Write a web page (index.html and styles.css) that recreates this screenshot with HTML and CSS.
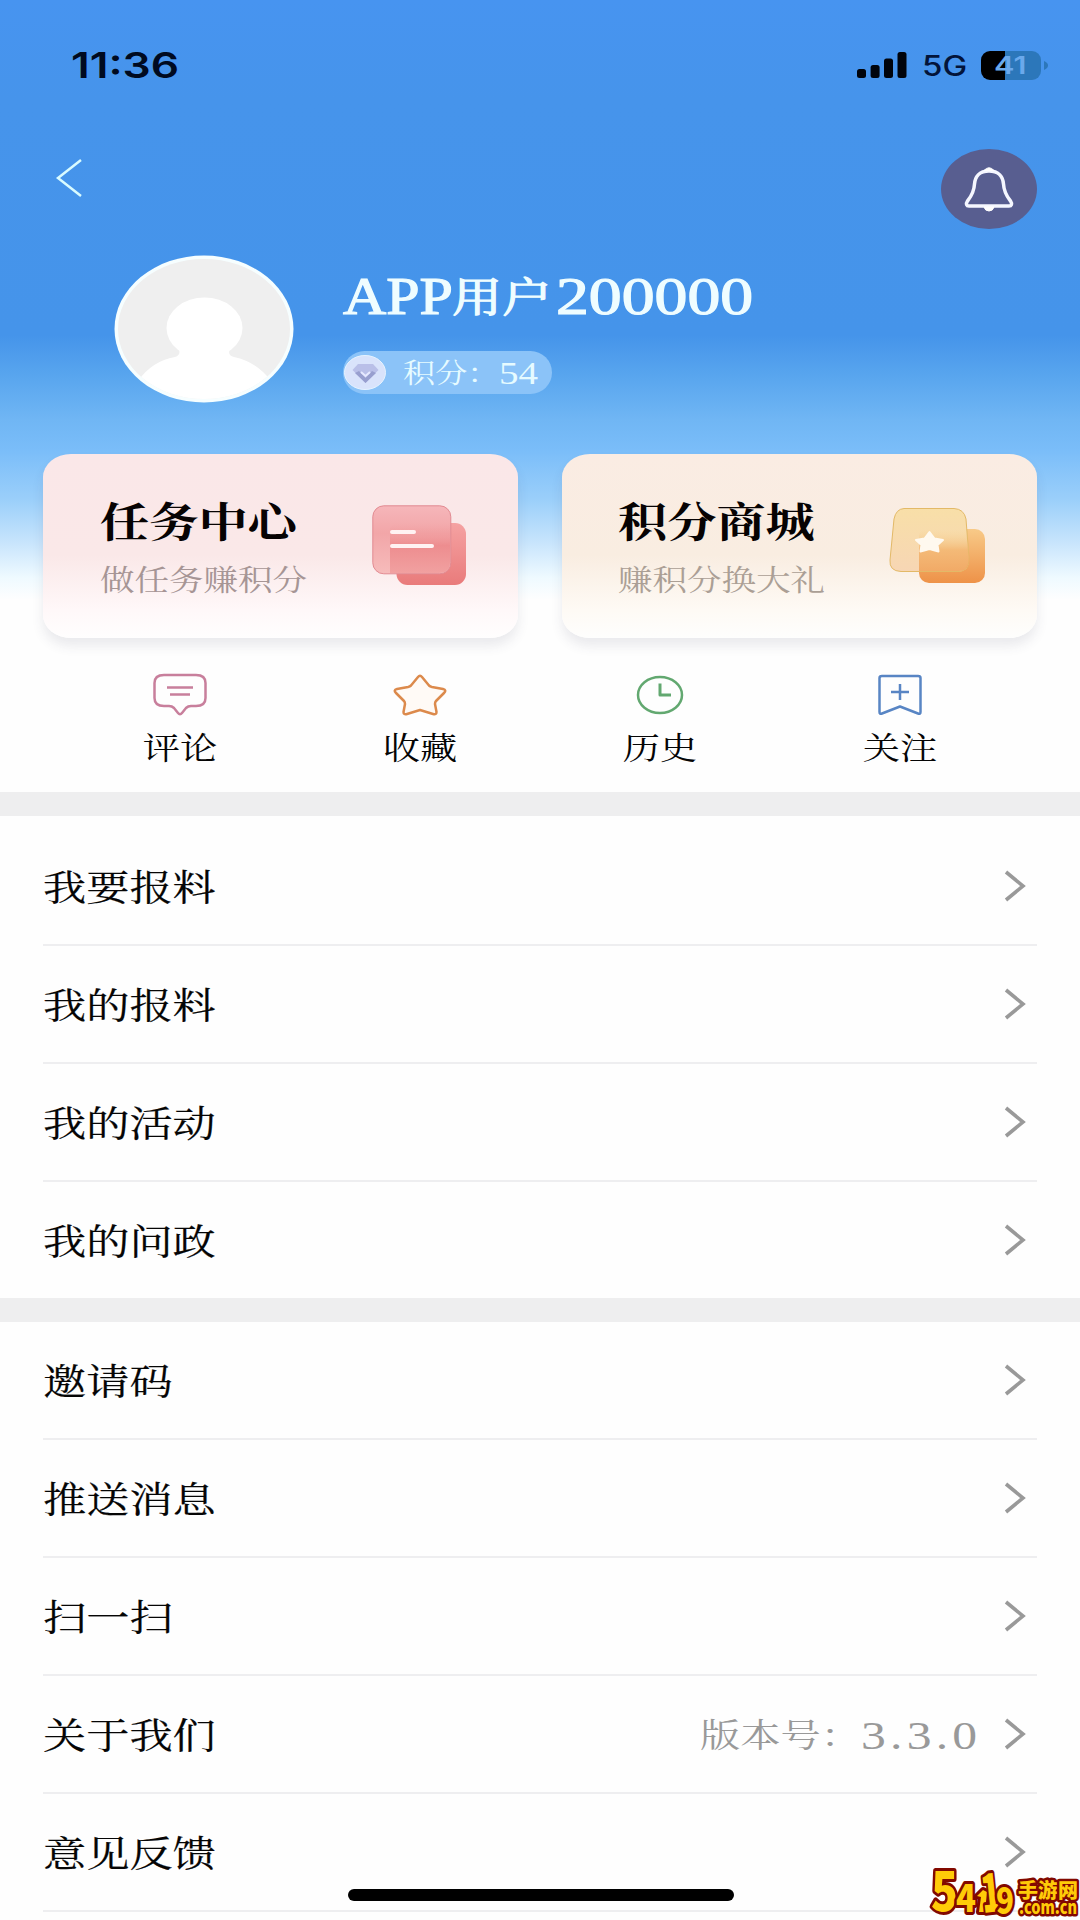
FILE: index.html
```html
<!DOCTYPE html>
<html lang="zh-CN">
<head>
<meta charset="utf-8">
<title>个人中心</title>
<link rel="stylesheet" href="styles.css">
</head>
<body>
<div class="screen">
  <header class="hero">
    <div class="status">
      <span class="time"><span class="wide">11:36</span></span>
      <div class="status-right">
        <svg class="signal" width="50" height="26" viewBox="0 0 50 26"><rect x="0" y="17" width="9" height="9" rx="2.5"/><rect x="13.6" y="13" width="9" height="13" rx="2.5"/><rect x="27" y="6.500" width="9" height="19.500" rx="2.500"/><rect x="40.500" y="0" width="9" height="26" rx="2.500"/></svg>
        <span class="network"><span class="wide">5G</span></span>
        <div class="battery"><span class="wide">41</span></div>
        <svg width="4" height="11" viewBox="0 0 5 11"><path d="M0 0Q5 2 5 5.500T0 11Z" fill="#2c77ba"/></svg>
      </div>
    </div>
    <div class="nav">
      <svg class="back" width="28" height="40" viewBox="0 0 28 40"><path d="M26 2L3 20L26 38"/></svg>
      <div class="bell">
        <svg width="50" height="46" viewBox="0 0 50 46"><path d="M25 5C15 5 11 11 10.500 18C10 27 6.500 31 3.500 35C1.500 38 2.500 40 5 40H45C47.500 40 48.500 38 46.500 35C43.500 31 40 27 39.500 18C39 11 35 5 25 5Z" fill="none" stroke="#f5f7ff" stroke-width="3.500"/><path d="M20 4.500Q25-1 30 4.500ZM20 41H30Q29 45 25 45T20 41Z" fill="#fff" stroke="#fff"/></svg>
      </div>
    </div>
    <div class="profile">
      <svg class="avatar" width="180" height="148" viewBox="0 0 180 148"><defs><clipPath id="face"><ellipse cx="90" cy="74" rx="86" ry="70"/></clipPath></defs><ellipse cx="90" cy="74" rx="89.500" ry="73.500" fill="#f6feff"/><g clip-path="url(#face)"><path d="M0 0H180V148H0Z" fill="#efefef"/><ellipse cx="90.500" cy="73" rx="38" ry="30.500" fill="#fff"/><path d="M24 126Q38 106 61 102Q68 100 64 92H117Q112 100 120 102Q143 107 157 126V148H24Z" fill="#fff"/></g></svg>
      <div class="user">
        <div class="name"><span class="name-app">APP</span><span class="name-cn">用户</span><span class="name-id">200000</span></div>
        <div class="points">
          <svg width="42" height="35" viewBox="0 0 42 35"><ellipse cx="21" cy="17.500" rx="20.500" ry="17" fill="#d9e3fb" stroke="#e6f3ff"/><path d="M14 9H29L34.500 15L21.500 28L8.500 15Z" fill="#b9bfe8"/><path d="M11 18L21.500 28L32 18L28 16L21.500 23L15 16Z" fill="#989fcf"/><path d="M17 17L21.500 21L26 17" fill="none" stroke="#e6e9ff" stroke-width="2"/></svg>
          <span class="points-label">积分：</span><span class="points-value">54</span>
        </div>
      </div>
    </div>
    <div class="cards">
      <section class="card card-task">
        <div><h2>任务中心</h2><p>做任务赚积分</p></div>
        <svg width="96" height="82" viewBox="0 0 96 82">
          <defs><linearGradient id="r1" x2="0" y2="1"><stop stop-color="#f5a2a2"/><stop offset="1" stop-color="#e97b7b"/></linearGradient><linearGradient id="r2" x2="0" y2="1"><stop stop-color="#f6b6ba"/><stop offset=".4" stop-color="#f2a6a8"/><stop offset="1" stop-color="#f6bbbb"/></linearGradient><linearGradient id="r3" x2="0" y2="1"><stop stop-color="#f2a0a2" stop-opacity="0"/><stop offset=".45" stop-color="#ec8587"/><stop offset="1" stop-color="#f09a9a"/></linearGradient></defs>
          <rect x="24.500" y="18" width="69.500" height="62" rx="11" fill="url(#r1)"/><rect x=".8" y=".8" width="78" height="68" rx="11" fill="url(#r2)" stroke="#e28b92"/><path d="M18 68V26Q18 18 28 18H78V57Q78 68 67 68Z" fill="url(#r3)" opacity=".8"/><path d="M20 27H42M20 41H60" stroke="#fff2f2" stroke-width="4" stroke-linecap="round"/></svg>
      </section>
      <section class="card card-shop">
        <div><h2>积分商城</h2><p>赚积分换大礼</p></div>
        <svg width="96" height="82" viewBox="0 0 96 82">
          <defs><linearGradient id="o1" x2="0" y2="1"><stop stop-color="#f8ca88"/><stop offset="1" stop-color="#ee9248"/></linearGradient><linearGradient id="o2" x2="0" y2="1"><stop stop-color="#f8dfa8"/><stop offset="1" stop-color="#f7d6b4"/></linearGradient><linearGradient id="o3" x2="0" y2="1"><stop stop-color="#f7d795" stop-opacity="0"/><stop offset=".5" stop-color="#f3b46d"/><stop offset="1" stop-color="#f0a259"/></linearGradient></defs>
          <rect x="29" y="24" width="66" height="54" rx="10" fill="url(#o1)"/><path d="M14 3.500H64Q74 4 76 14L79 54Q79 66 69 66.500H11Q-1 66 0 55L4 14Q6 4 14 3.500Z" fill="url(#o2)" stroke="#e3b967"/><path d="M29 66V32Q29 24 38 24H76.500L79 54Q79 66 69 66Z" fill="url(#o3)" opacity=".85"/><path d="M39.500 27L44.500 33.500L53 35L47.500 40L48.500 46.500L39.500 44L30.500 46.500L31.500 40L26 35L34.500 33.500Z" fill="#fff9ef" stroke="#fff9ef" stroke-width="2" stroke-linejoin="round"/></svg>
      </section>
    </div>
  </header>

  <nav class="shortcuts">
    <div class="shortcut"><svg width="56" height="46" viewBox="0 0 56 46" stroke="#c87f9c" fill="none"><path d="M12 3H44Q53.500 3 53.500 11V26Q53.500 34 44 34H39Q36 34 34 36L30 41Q28 43.500 26 41L22 36Q20 34 17 34H12Q2.500 34 2.500 26V11Q2.500 3 12 3Z"/><path d="M15 15.500H41M18 22.500H38"/></svg><span>评论</span></div>
    <div class="shortcut"><svg width="56" height="46" viewBox="0 0 56 46" stroke="#dc8a4c" fill="#fffaf6"><path d="M26 5Q28 2.500 30 5L37 13.500Q38 14.500 40 15L51 17Q55 18 52 21L44 29Q43 30 43 32L44.500 40Q44.500 43 41 42L28 38L15 42Q11.500 43 11.500 40L13 32Q13 30 12 29L4 21Q1 18 5 17L16 15Q18 14.500 19 13.500Z"/></svg><span>收藏</span></div>
    <div class="shortcut"><svg width="56" height="46" viewBox="0 0 56 46" stroke="#62a870" fill="none"><ellipse cx="28" cy="23" rx="22" ry="18"/><path d="M28 11.500V23H39" stroke-width="3"/></svg><span>历史</span></div>
    <div class="shortcut"><svg width="56" height="46" viewBox="0 0 56 46" stroke="#5885c4" fill="none"><path d="M10 4H46Q48.500 4 48.500 6V40Q48.500 42.500 46 41.500L28 34.500L10 41.500Q7.500 42.500 7.500 40V6Q7.500 4 10 4Z"/><path d="M28 12V28M19 20H37"/></svg><span>关注</span></div>
  </nav>

  <ul class="menu menu-first">
    <li><span class="label">我要报料</span><svg class="arrow" viewBox="0 0 22 32"><path d="M2 2L19 16L2 30"/></svg></li>
    <li><span class="label">我的报料</span><svg class="arrow" viewBox="0 0 22 32"><path d="M2 2L19 16L2 30"/></svg></li>
    <li><span class="label">我的活动</span><svg class="arrow" viewBox="0 0 22 32"><path d="M2 2L19 16L2 30"/></svg></li>
    <li><span class="label">我的问政</span><svg class="arrow" viewBox="0 0 22 32"><path d="M2 2L19 16L2 30"/></svg></li>
  </ul>
  <ul class="menu">
    <li><span class="label">邀请码</span><svg class="arrow" viewBox="0 0 22 32"><path d="M2 2L19 16L2 30"/></svg></li>
    <li><span class="label">推送消息</span><svg class="arrow" viewBox="0 0 22 32"><path d="M2 2L19 16L2 30"/></svg></li>
    <li><span class="label">扫一扫</span><svg class="arrow" viewBox="0 0 22 32"><path d="M2 2L19 16L2 30"/></svg></li>
    <li><span class="label">关于我们</span><span class="version"><span class="version-label">版本号：</span><span class="version-value">3.3.0</span></span><svg class="arrow" viewBox="0 0 22 32"><path d="M2 2L19 16L2 30"/></svg></li>
    <li><span class="label">意见反馈</span><svg class="arrow" viewBox="0 0 22 32"><path d="M2 2L19 16L2 30"/></svg></li>
  </ul>
  <div class="home-bar"></div>
  <svg class="watermark" width="150" height="54" viewBox="0 0 150 54">
    <g class="logo-digits"><text x="1" y="45" font-size="54" textLength="27" lengthAdjust="spacingAndGlyphs">5</text><text x="26" y="46" font-size="38" textLength="20" lengthAdjust="spacingAndGlyphs">4</text><path d="M47 30L53 24L57 26L55 46H49L51 31Z"/><text x="51" y="46" font-size="52" textLength="20" lengthAdjust="spacingAndGlyphs" transform="rotate(-6 61 28)">1</text><text x="66" y="48" font-size="36" textLength="18" lengthAdjust="spacingAndGlyphs">9</text></g>
    <g class="logo-words"><text x="88" y="32" font-size="20" textLength="60">手游网</text><text x="89" y="48" font-size="18" textLength="58" lengthAdjust="spacingAndGlyphs">.com.cn</text></g>
  </svg>
</div>
</body>
</html>
```
FILE: styles.css
```css
* { box-sizing: border-box; }
body {
  margin: 0;
  font-family: "Liberation Serif", "Noto Serif CJK SC", "Noto Serif SC", "Noto Sans CJK SC", serif;
  color: #050505;
  background: #fff;
}
h2, p, ul { margin: 0; padding: 0; }
svg { display: block; flex: none; overflow: visible; }

.screen { position: relative; width: 1080px; height: 1920px; overflow: hidden; background: #fefefe; }
.hero {
  height: 660px;
  background: linear-gradient(#4794f0 0, #4694eb 100px, #4594ea 335px, #58a5ee 375px, #70b6f4 420px, #7abdf9 450px, #9bcffa 500px, #c5e3fc 540px, #effaff 578px, #fefefe 600px);
}

.status { height: 130px; padding: 0 32px 0 71px; display: flex; justify-content: space-between; }
.wide { display: inline-block; transform-origin: left center; white-space: nowrap; }
.time { font: 600 36px/44px Inter, sans-serif; color: #000a20; padding-top: 43px; }
.time .wide { transform: scaleX(1.23); }
.status-right { display: flex; align-items: center; height: 130px; gap: 0; }
.signal { margin-right: 15px; fill: #00040c; }
.network { width: 59px; font: 500 28px/36px Inter, sans-serif; color: #03143a; padding-top: 2px; }
.network .wide { transform: scaleX(1.18); }
.battery { width: 60px; height: 29px; margin-right: 3px; padding-left: 13px; border-radius: 9px; background: linear-gradient(90deg, #000 24px, #2c77ba 24px); font: 600 24px/29px Inter, sans-serif; color: #6aa9ec; }
.battery .wide { transform: scaleX(1.28); }

.nav { height: 125px; padding: 0 43px 0 55px; display: flex; justify-content: space-between; }
.back { margin-top: 28px; fill: none; stroke: #d8fbff; stroke-width: 2.5; }
.bell { width: 96px; height: 80px; margin-top: 19px; border-radius: 50%; background: #585e90; display: flex; align-items: center; justify-content: center; }

.profile { height: 199px; padding-left: 114px; display: flex; gap: 49px; }
.name { height: 60px; margin-top: 11px; display: flex; font-size: 53px; line-height: 60px; color: #effdff; -webkit-text-stroke: 1.2px #effdff; }
.name span { display: block; transform-origin: left center; white-space: nowrap; }
.name-app { width: 109px; transform: scaleX(1.13); }
.name-cn { width: 104px; padding-top: 2px; font-size: 41px; transform: scaleX(1.22); }
.name-id { transform: scaleX(1.24); }
.points { width: 209px; height: 43px; margin-top: 25px; padding-left: 1px; display: flex; align-items: center; border-radius: 22px; background: #8bc3f8; color: #e6fbff; line-height: 43px; }
.points-label { width: 96px; margin-left: 17px; padding-top: 3px; font-size: 27px; transform: scaleX(1.19); transform-origin: left; white-space: nowrap; }
.points-value { padding-top: 2px; font-size: 32px; transform: scaleX(1.22); transform-origin: left; }

.cards { padding: 0 43px; display: grid; grid-template-columns: 475px 475px; gap: 44px; }
.card { height: 184px; padding: 0 51px 0 57px; border-radius: 28px / 23px; display: flex; align-items: center; justify-content: space-between; box-shadow: 0 8px 12px rgba(60, 60, 90, .1); }
.card > div { width: 210px; padding-top: 5px; }
.card svg { margin-right: -1px; }
.card-task { background: linear-gradient(#fae7e8 0, #fae8e8 55%, #fff8f9 85%, #fffefe); }
.card-shop { padding: 0 52px 0 56px; background: linear-gradient(#faece3 0, #f9ede1 55%, #fefaf5 85%, #fefefd); }
.card h2 { width: 164px; font-size: 41px; line-height: 52px; font-weight: 700; color: #070303; transform: scaleX(1.2); transform-origin: left; white-space: nowrap; }
.card p { width: 174px; margin-top: 12px; font-size: 29px; line-height: 40px; transform: scaleX(1.19); transform-origin: left; white-space: nowrap; }
.card-task p { color: #a69595; }
.card-shop p { color: #ab9f95; }
.shortcuts { height: 132px; padding: 12px 60px 0; display: grid; grid-template-columns: repeat(4, 240px); }
.shortcut { display: flex; flex-direction: column; align-items: center; }
.shortcut svg { stroke-width: 2.5; stroke-linejoin: round; }
.shortcut span { margin-top: 11px; font-size: 31px; line-height: 40px; transform: scaleX(1.2); }

.menu { list-style: none; padding: 0 43px; border-top: 24px solid #eeeeef; }
.menu-first { height: 506px; padding-top: 12px; }
.menu li { height: 118.100px; display: flex; align-items: center; border-bottom: 2px solid #eeeef0; padding-right: 11px; }
.menu-first li:last-child { border-bottom-color: transparent; }
.label { flex: 1; padding-top: 5px; font-size: 36px; line-height: 48px; transform: scaleX(1.2); transform-origin: left; -webkit-text-stroke: .2px #050505; }
.arrow { width: 22px; height: 32px; fill: none; stroke: #999; stroke-width: 3.6; }
.version { display: flex; align-items: center; margin-right: 27px; color: #999; line-height: 44px; }
.version-label { width: 161px; padding-top: 3px; font-size: 33px; transform: scaleX(1.22); transform-origin: left; white-space: nowrap; }
.version-value { width: 116px; padding-top: 1px; font-size: 41px; letter-spacing: 3.500px; transform: scaleX(1.21); transform-origin: left; }

.home-bar { position: absolute; left: 348px; top: 1889px; width: 386px; height: 12px; border-radius: 6px; background: #000; }
.watermark { position: absolute; left: 930px; top: 1866px; font-family: "Noto Sans CJK SC", sans-serif; font-weight: 900; }
.watermark text, .watermark path { fill: #ffcb08; stroke: #820900; stroke-linejoin: round; paint-order: stroke; }
.logo-digits text, .logo-digits path { stroke-width: 6px; }
.logo-words text { stroke-width: 5px; }
```
